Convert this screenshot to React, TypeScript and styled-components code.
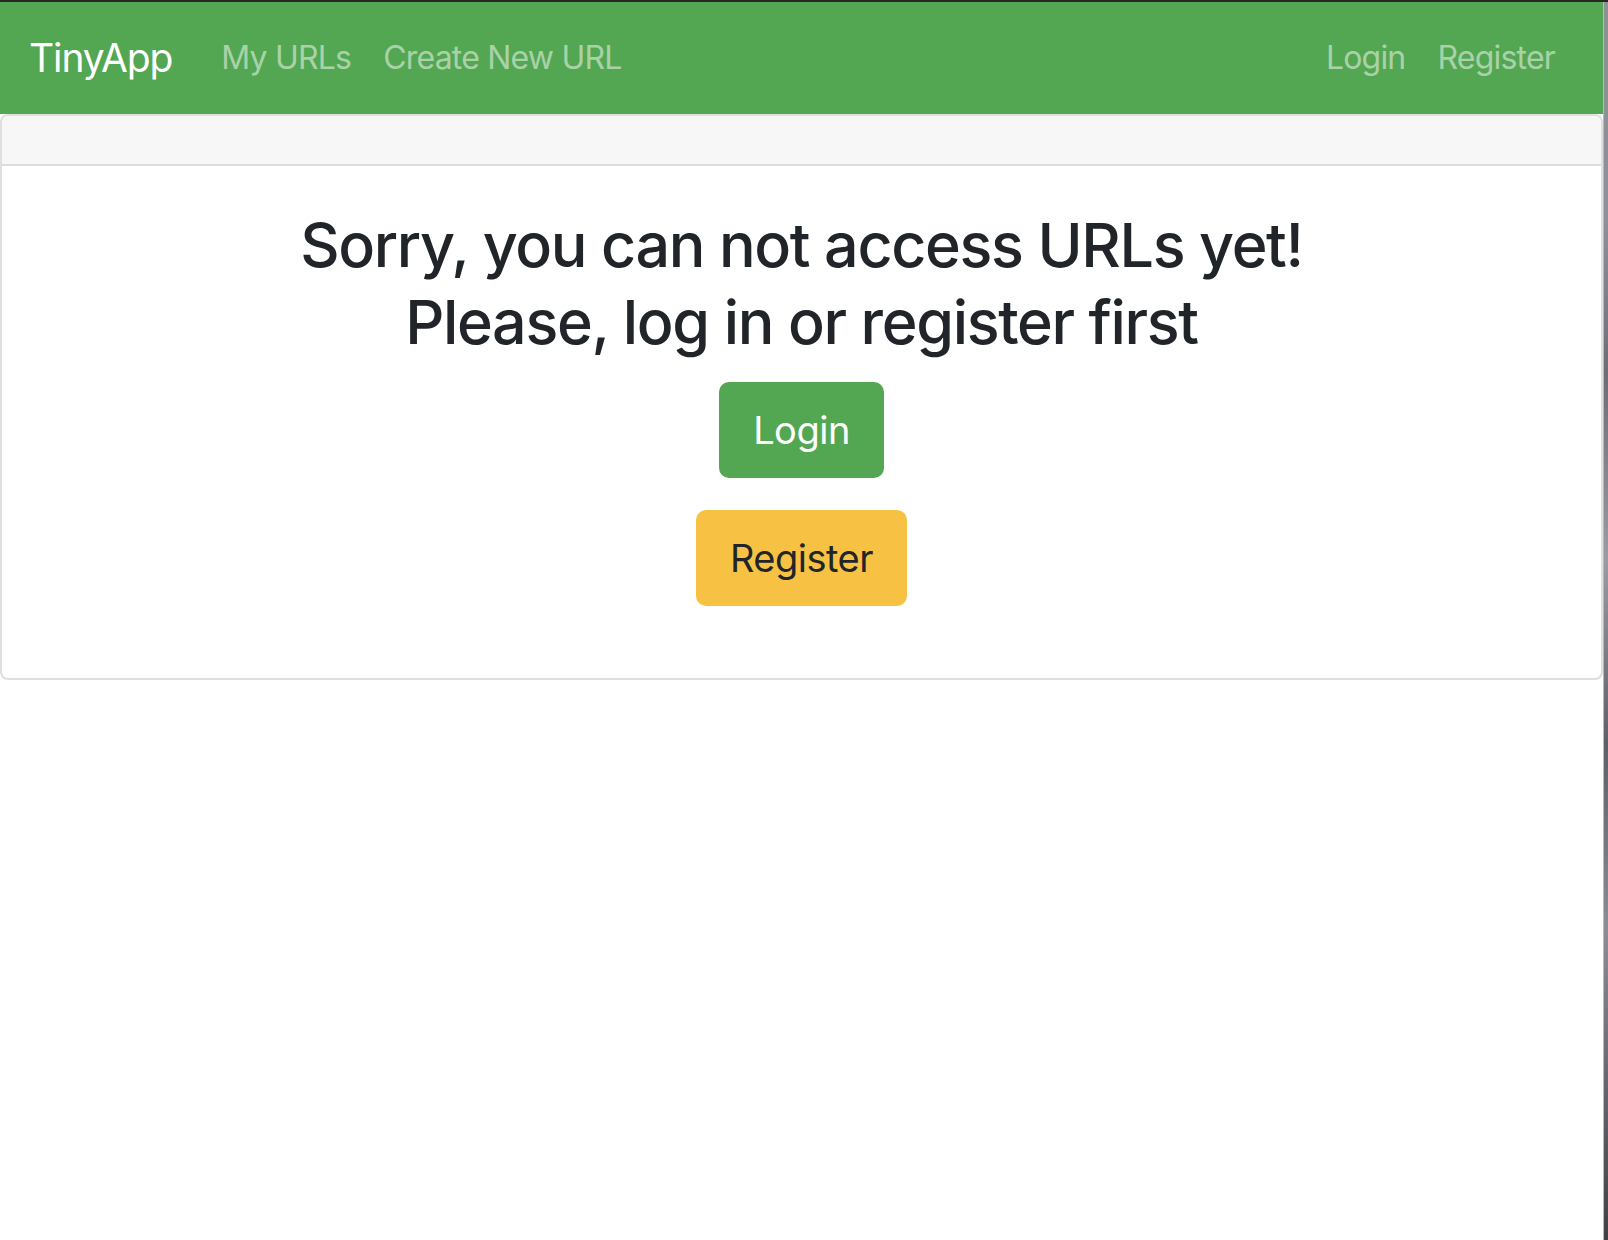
import React from "react";
import styled, { createGlobalStyle } from "styled-components";

const Global = createGlobalStyle`
  html, body { margin: 0; padding: 0; background: #ffffff; }
  body { font-family: Inter, "Noto Sans", "Liberation Sans", sans-serif; color: #212529; }
  * { box-sizing: border-box; }
`;

const Frame = styled.div`
  display: flex;
  min-height: 1240px;
  border-top: 2px solid #262626;
`;

const Page = styled.div`
  flex: 1;
  background: #ffffff;
`;

const SideStrip = styled.div`
  width: 5px;
  background: linear-gradient(180deg, #8d9097 0%, #8d9097 18%, #6b6e73 30%, #9a9ca1 45%, #5d6064 60%, #8b8e93 75%, #3e4044 100%);
  border-left: 1px solid #b7b9bd;
`;

const Navbar = styled.nav`
  height: 112px;
  background: #53a652;
  display: flex;
  align-items: center;
  padding: 16px 32px 16px 29px;
`;

const Brand = styled.a`
  font-size: 39px;
  line-height: 60px;
  padding: 10px 0;
  margin-right: 33px;
  color: #ffffff;
  text-decoration: none;
  letter-spacing: -1.1px;
`;

const NavList = styled.div<{ $end?: boolean }>`
  display: flex;
  align-items: center;
  margin-left: ${(p) => (p.$end ? "auto" : "0")};
`;

const NavLink = styled.a`
  font-size: 32px;
  line-height: 48px;
  padding: 16px 16px;
  color: rgba(255, 255, 255, 0.5);
  text-decoration: none;
  letter-spacing: -0.8px;
`;

const Card = styled.section`
  border: 2px solid #dfdfdf;
  border-radius: 8px;
  background: #ffffff;
  overflow: hidden;
`;

const CardHeader = styled.div`
  height: 50px;
  background: #f7f7f7;
  border-bottom: 2px solid #dcdcdc;
`;

const CardBody = styled.div`
  padding: 41px 40px 40px;
  display: flex;
  flex-direction: column;
  align-items: center;
`;

const Title = styled.h2`
  margin: 0 0 21px;
  font-size: 61px;
  line-height: 77px;
  font-weight: 500;
  text-align: center;
  color: #212529;
  letter-spacing: -1.35px;
`;

const Button = styled.button<{ $variant: "success" | "warning" }>`
  font-family: inherit;
  font-size: 38px;
  line-height: 60px;
  padding: 16px 32px;
  border-radius: 10px;
  border: 2px solid ${(p) => (p.$variant === "success" ? "#53a652" : "#f7c244")};
  background: ${(p) => (p.$variant === "success" ? "#53a652" : "#f7c244")};
  color: ${(p) => (p.$variant === "success" ? "#ffffff" : "#212529")};
  margin-bottom: 32px;
  cursor: pointer;
  letter-spacing: -0.5px;
`;

export default function App() {
  return (
    <>
      <Global />
      <Frame>
        <Page>
          <Navbar>
            <Brand href="#">TinyApp</Brand>
            <NavList>
              <NavLink href="#">My URLs</NavLink>
              <NavLink href="#">Create New URL</NavLink>
            </NavList>
            <NavList $end>
              <NavLink href="#">Login</NavLink>
              <NavLink href="#">Register</NavLink>
            </NavList>
          </Navbar>
          <Card>
            <CardHeader />
            <CardBody>
              <Title>
                Sorry, you can not access URLs yet!
                <br />
                Please, log in or register first
              </Title>
              <Button $variant="success">Login</Button>
              <Button $variant="warning">Register</Button>
            </CardBody>
          </Card>
        </Page>
        <SideStrip />
      </Frame>
    </>
  );
}
